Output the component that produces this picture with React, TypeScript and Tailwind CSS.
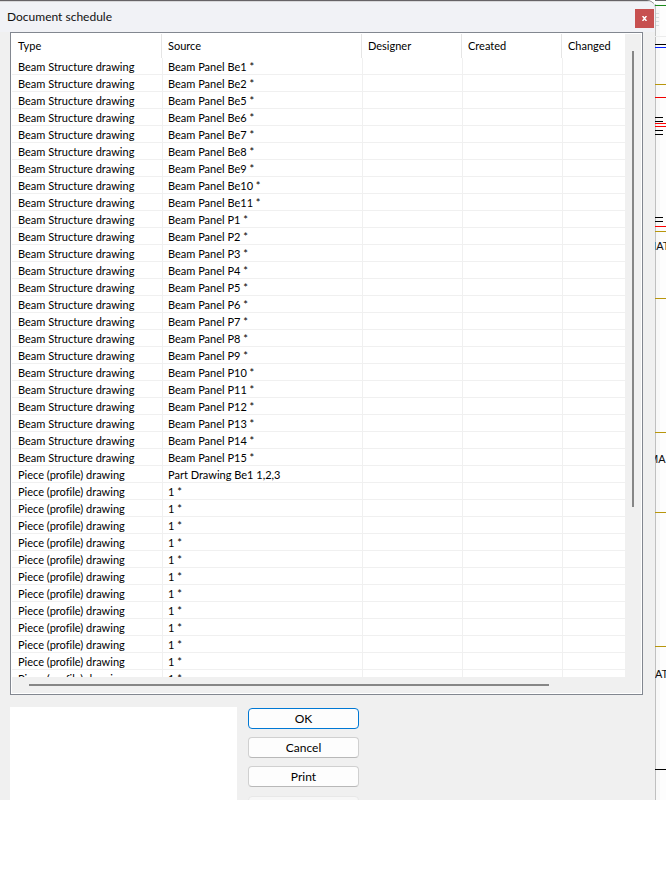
import React from 'react';

const beamNames = [
  'Be1', 'Be2', 'Be5', 'Be6', 'Be7', 'Be8', 'Be9', 'Be10', 'Be11',
  'P1', 'P2', 'P3', 'P4', 'P5', 'P6', 'P7', 'P8', 'P9',
  'P10', 'P11', 'P12', 'P13', 'P14', 'P15',
];

type Row = { type: string; source: string };

const rows: Row[] = [
  ...beamNames.map((n) => ({ type: 'Beam Structure drawing', source: `Beam Panel ${n} *` })),
  { type: 'Piece (profile) drawing', source: 'Part Drawing Be1 1,2,3' },
  ...Array.from({ length: 12 }, () => ({ type: 'Piece (profile) drawing', source: '1 *' })),
];

const columns = ['Type', 'Source', 'Designer', 'Created', 'Changed'];

// y, width and colour of each drawing line that shows beside the dialog
const lines: [number, number, string][] = [
  [5, 11, '#1a8a1a'], [36, 11, '#ececec'], [44, 11, '#000000'], [47, 11, '#0020ff'],
  [84, 11, '#b8960c'], [97, 11, '#f00000'], [117, 8, '#000000'], [121, 8, '#000000'],
  [123, 11, '#ff0000'], [126, 11, '#ff0000'], [130, 8, '#000000'], [134, 8, '#000000'],
  [217, 8, '#000000'], [221, 8, '#000000'], [226, 11, '#ff0000'], [231, 11, '#b8960c'],
  [298, 11, '#b8960c'], [432, 11, '#b8960c'], [512, 11, '#b8960c'], [646, 11, '#b8960c'],
  [769, 11, '#000000'],
];

function DrawingEdge() {
  return (
    <svg width="11" height="800" viewBox="0 0 11 800" className="block shrink-0 overflow-hidden bg-[#fdfdfd]" shapeRendering="crispEdges">
      <rect x="0" y="0" width="11" height="1" fill="#666366" />
      <rect x="0" y="4" width="1" height="796" fill="#c0c0c0" />
      <rect x="1" y="4" width="4" height="796" fill="#f8f8f8" />
      {[13, 17, 21, 25].map((y) => (
        <rect key={y} x="1" y={y} width="3" height="1" fill="#d3dcde" />
      ))}
      {lines.map(([y, w, c]) => (
        <rect key={y} x="0" y={y} width={w} height="1" fill={c} />
      ))}
      <g fontFamily="Liberation Sans, sans-serif" fontSize="11" fill="#111111">
        <text x="-8" y="250">MAT</text>
        <text x="-6" y="463">MA</text>
        <text x="0" y="678">AT</text>
      </g>
    </svg>
  );
}

function DialogButton({ children, primary = false }: { children: React.ReactNode; primary?: boolean }) {
  return (
    <button
      type="button"
      className={`h-[21px] shrink-0 rounded-sm border bg-[#fdfdfd] text-center leading-5 ${
        primary ? 'border-[#0078d4]' : 'border-[#d0d0d0] border-b-[#b8b8b8]'
      }`}
    >
      {children}
    </button>
  );
}

export default function App() {
  return (
    <main className="flex bg-white font-['Lato','Liberation_Sans',sans-serif] text-[11px] text-black [font-variant-ligatures:none]">
      <section aria-labelledby="title" className="flex h-[800px] min-w-0 flex-1 flex-col overflow-hidden rounded-tr-lg border-t border-[#666366] bg-[#f0f0f0]">
        <header className="flex h-[31px] shrink-0 items-center justify-between border-t border-[#d8d8da] bg-[#f1f2f6] pl-[7px]">
          <h1 id="title" className="text-xs text-[#111111]">Document schedule</h1>
          <button type="button" aria-label="Close" className="mt-[3px] mr-px flex h-[19px] w-[19px] items-center justify-center bg-[#c75050]">
            <svg width="5" height="5" viewBox="0 0 5 5" stroke="#ffffff" strokeWidth="1.5">
              <path d="M0.5 0 L4.5 5 M4.5 0 L0.5 5" />
            </svg>
          </button>
        </header>

        <div className="mr-3 ml-[10px] flex h-[663px] shrink-0 flex-col border border-[#828790] bg-white p-px">
          <div className="flex min-h-0 flex-1">
            <div className="min-w-0 flex-1 overflow-hidden">
              <table className="w-full table-fixed border-separate border-spacing-0 text-left">
                <colgroup>
                  <col className="w-[150px]" />
                  <col className="w-[200px]" />
                  <col className="w-[100px]" />
                  <col className="w-[100px]" />
                  <col />
                </colgroup>
                <thead>
                  <tr>
                    {columns.map((c) => (
                      <th key={c} scope="col" className="h-6 border-r border-[#e5e5e5] p-0 pl-[6px] font-normal last:border-r-0">
                        {c}
                      </th>
                    ))}
                  </tr>
                </thead>
                <tbody>
                  {rows.map((r, i) => (
                    <tr key={i}>
                      <td className="h-[17px] border-b border-[#f0f0f0] p-0 pt-[2px] pl-[6px] leading-[14px] whitespace-nowrap">{r.type}</td>
                      <td className="border-b border-l border-[#f0f0f0] p-0 pt-[2px] pl-[5px] leading-[14px] whitespace-nowrap">{r.source}</td>
                      <td className="border-b border-l border-[#f0f0f0] p-0" />
                      <td className="border-b border-l border-[#f0f0f0] p-0" />
                      <td className="border-b border-l border-[#f0f0f0] p-0" />
                    </tr>
                  ))}
                </tbody>
              </table>
            </div>
            <div className="flex w-4 shrink-0 justify-center bg-[#f0f0f0] pt-[17px]">
              <div className="h-[456px] w-[2px] bg-[#868686]" />
            </div>
          </div>
          <div className="flex h-4 shrink-0 items-center bg-[#f0f0f0] pl-[17px]">
            <div className="h-[2px] w-[520px] bg-[#868686]" />
          </div>
        </div>

        <div className="mt-3 ml-[10px] flex min-h-0 flex-1 gap-[11px]">
          <div className="w-[227px] bg-white" />
          <div className="flex w-[111px] flex-col gap-2 pt-px text-xs">
            <DialogButton primary>OK</DialogButton>
            <DialogButton>Cancel</DialogButton>
            <DialogButton>Print</DialogButton>
            <div className="mt-px h-[21px] shrink-0 rounded-sm border border-[#e8e8e8] bg-[#f7f7f7]" />
          </div>
        </div>
      </section>
      <DrawingEdge />
    </main>
  );
}
